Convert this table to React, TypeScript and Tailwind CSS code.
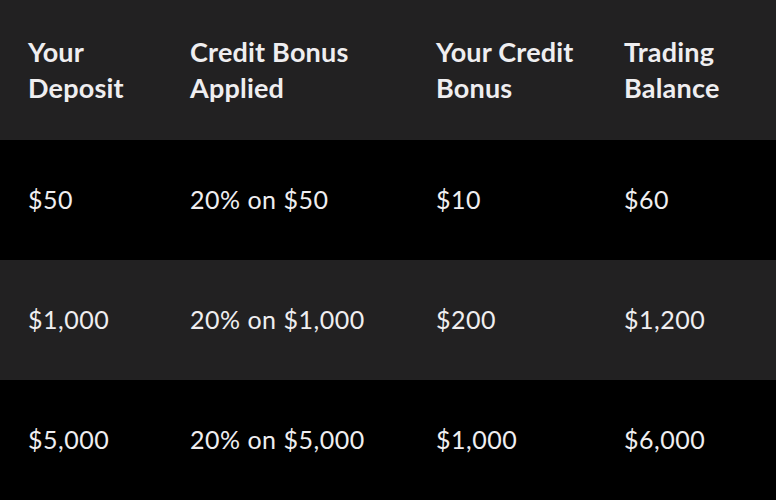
const rows = [
  ["$50", "20% on $50", "$10", "$60"],
  ["$1,000", "20% on $1,000", "$200", "$1,200"],
  ["$5,000", "20% on $5,000", "$1,000", "$6,000"],
];

const headers = ["Your Deposit", "Credit Bonus Applied", "Your Credit Bonus", "Trading Balance"];

const cols = "grid grid-cols-[162px_246px_188px_1fr] pl-[28px] items-center";

export default function App() {
  return (
    <div className="w-[776px] h-[500px] bg-black text-[#efeef0] font-['Lato',sans-serif]">
      <div className={`${cols} h-[140px] bg-[#222122] text-[27px] leading-[36px] font-bold tracking-[0.2px]`}>
        <div className="w-[115px]">{headers[0]}</div>
        <div className="w-[175px]">{headers[1]}</div>
        <div className="w-[150px]">{headers[2]}</div>
        <div className="w-[110px]">{headers[3]}</div>
      </div>
      {rows.map((r, i) => (
        <div
          key={i}
          className={`${cols} h-[120px] text-[25px] font-normal tracking-[0.5px] ${i % 2 === 1 ? "bg-[#222122]" : "bg-black"}`}
        >
          {r.map((c, j) => (
            <div key={j}>{c}</div>
          ))}
        </div>
      ))}
    </div>
  );
}
